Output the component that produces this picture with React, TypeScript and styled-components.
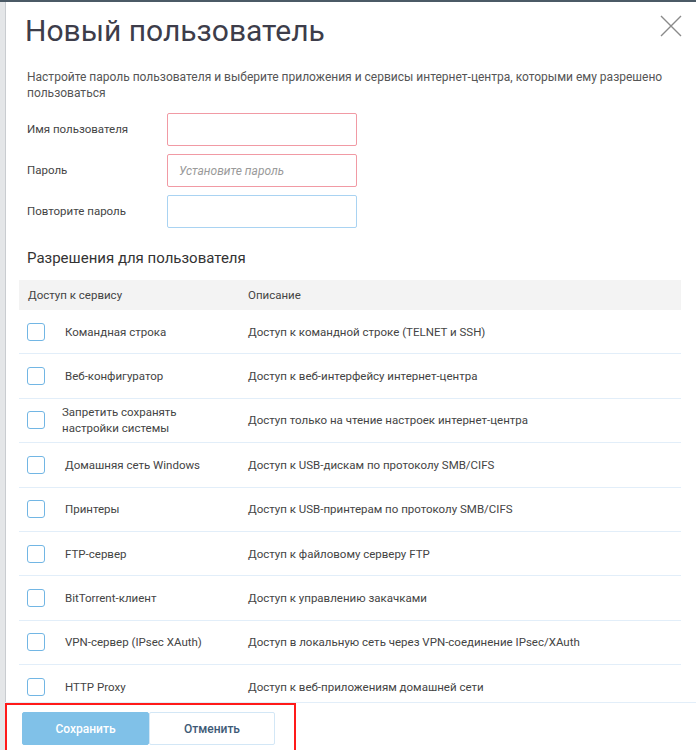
import React from "react";
import styled, { createGlobalStyle } from "styled-components";

const Global = createGlobalStyle`
  html, body { margin: 0; padding: 0; background: #fff; }
  body { font-family: Roboto, "Noto Sans", "Liberation Sans", sans-serif; overflow: hidden; }
  * { box-sizing: border-box; }
`;

const Screen = styled.div`
  height: 750px;
  display: flex;
  flex-direction: column;
  border-top: 2px solid #4b5a66;
`;

const Body = styled.div`
  flex: 1;
  display: flex;
  min-height: 0;
`;

const Backdrop = styled.div`
  width: 6px;
  background: #e4e6e8;
  border-right: 1px solid #c9ccd0;
  flex-shrink: 0;
`;

const Modal = styled.div`
  flex: 1;
  display: flex;
  flex-direction: column;
  min-height: 0;
  position: relative;
`;

const Scroll = styled.div`
  flex: 1;
  overflow: hidden;
  padding: 0 15px 0 13px;
`;

const Title = styled.h1`
  margin: 11px 0 0 6px;
  font-size: 30px;
  line-height: 36px;
  font-weight: 400;
  color: #3d3d4a;
`;

const Close = styled.button`
  position: absolute;
  top: 11px;
  right: 12px;
  width: 26px;
  height: 26px;
  padding: 0;
  border: none;
  background: none;
  display: flex;
  align-items: center;
  justify-content: center;
`;

const Desc = styled.p`
  margin: 20px 0 0 8px;
  font-size: 12px;
  line-height: 16px;
  color: #555;
  max-width: 650px;
`;

const Form = styled.div`
  margin: 12px 0 0 8px;
  display: flex;
  flex-direction: column;
  gap: 8px;
`;

const FormRow = styled.label`
  display: flex;
  align-items: center;
`;

const Label = styled.span`
  width: 140px;
  font-size: 11.5px;
  color: #444;
  margin-top: -2px;
`;

const Input = styled.input<{ $invalid?: boolean }>`
  width: 190px;
  height: 33px;
  border: 1px solid ${(p) => (p.$invalid ? "#f19aa4" : "#a9d3f2")};
  border-radius: 2px;
  padding: 0 11px;
  font-family: inherit;
  font-size: 12px;
  outline: none;
  &::placeholder {
    color: #9a9a9a;
    font-style: italic;
  }
`;

const Section = styled.h2`
  margin: 20px 0 0 8px;
  font-size: 15px;
  line-height: 20px;
  font-weight: 400;
  color: #333;
`;

const Table = styled.div`
  margin-top: 12px;
`;

const Head = styled.div`
  display: grid;
  grid-template-columns: 220px 1fr;
  height: 30px;
  align-items: center;
  background: #f3f3f3;
  font-size: 11.5px;
  color: #444;
  padding-left: 9px;
`;

const Row = styled.div`
  display: grid;
  grid-template-columns: 38px 183px 1fr;
  align-items: center;
  height: 44.4px;
  border-bottom: 1px solid #e2eef9;
  padding-left: 8px;
  font-size: 11.5px;
  color: #444;
`;

const Check = styled.span`
  width: 18px;
  height: 18px;
  border: 1.5px solid #72b6e4;
  border-radius: 3px;
  background: #fff;
`;

const Name = styled.span<{ $tight?: boolean }>`
  line-height: 16px;
  margin-left: ${(p) => (p.$tight ? "-3px" : "0")};
`;

const Footer = styled.div`
  height: 48px;
  flex-shrink: 0;
  border-top: 1px solid #e2eef9;
  background: #fff;
  margin-left: -1px;
`;

const Marked = styled.div`
  width: 291px;
  height: 100%;
  border: 2px solid #ff1a1a;
  border-bottom: none;
  padding: 7px 0 0 15px;
  display: flex;
`;

const Btn = styled.button<{ $primary?: boolean }>`
  width: ${(p) => (p.$primary ? "127px" : "126px")};
  height: 33px;
  font-family: inherit;
  font-size: 12px;
  font-weight: 500;
  border-radius: 2px;
  border: 1px solid ${(p) => (p.$primary ? "#80c1e8" : "#d3e7f6")};
  background: ${(p) => (p.$primary ? "#80c1e8" : "#fff")};
  color: ${(p) => (p.$primary ? "#fff" : "#3e5a76")};
`;

const rows: { name: string; desc: string; tight?: boolean }[] = [
  { name: "Командная строка", desc: "Доступ к командной строке (TELNET и SSH)" },
  { name: "Веб-конфигуратор", desc: "Доступ к веб-интерфейсу интернет-центра" },
  { name: "Запретить сохранять настройки системы", desc: "Доступ только на чтение настроек интернет-центра", tight: true },
  { name: "Домашняя сеть Windows", desc: "Доступ к USB-дискам по протоколу SMB/CIFS" },
  { name: "Принтеры", desc: "Доступ к USB-принтерам по протоколу SMB/CIFS" },
  { name: "FTP-сервер", desc: "Доступ к файловому серверу FTP" },
  { name: "BitTorrent-клиент", desc: "Доступ к управлению закачками" },
  { name: "VPN-сервер (IPsec XAuth)", desc: "Доступ в локальную сеть через VPN-соединение IPsec/XAuth" },
  { name: "HTTP Proxy", desc: "Доступ к веб-приложениям домашней сети" },
];

export default function App() {
  return (
    <>
      <Global />
      <Screen>
        <Body>
          <Backdrop />
          <Modal>
            <Close aria-label="close">
              <svg width="24" height="24" viewBox="0 0 24 24">
                <path d="M2 2 L22 22 M22 2 L2 22" stroke="#8a8a8a" strokeWidth="1.4" fill="none" />
              </svg>
            </Close>
            <Scroll>
              <Title>Новый пользователь</Title>
              <Desc>
                Настройте пароль пользователя и выберите приложения и сервисы интернет-центра, которыми ему разрешено
                пользоваться
              </Desc>
              <Form>
                <FormRow>
                  <Label>Имя пользователя</Label>
                  <Input $invalid />
                </FormRow>
                <FormRow>
                  <Label>Пароль</Label>
                  <Input $invalid placeholder="Установите пароль" />
                </FormRow>
                <FormRow>
                  <Label>Повторите пароль</Label>
                  <Input />
                </FormRow>
              </Form>
              <Section>Разрешения для пользователя</Section>
              <Table>
                <Head>
                  <span>Доступ к сервису</span>
                  <span>Описание</span>
                </Head>
                {rows.map((r) => (
                  <Row key={r.name}>
                    <Check />
                    <Name $tight={r.tight}>
                      {r.tight ? (
                        <>
                          Запретить сохранять
                          <br />
                          настройки системы
                        </>
                      ) : (
                        r.name
                      )}
                    </Name>
                    <span>{r.desc}</span>
                  </Row>
                ))}
              </Table>
            </Scroll>
            <Footer>
              <Marked>
                <Btn $primary>Сохранить</Btn>
                <Btn>Отменить</Btn>
              </Marked>
            </Footer>
          </Modal>
        </Body>
      </Screen>
    </>
  );
}
